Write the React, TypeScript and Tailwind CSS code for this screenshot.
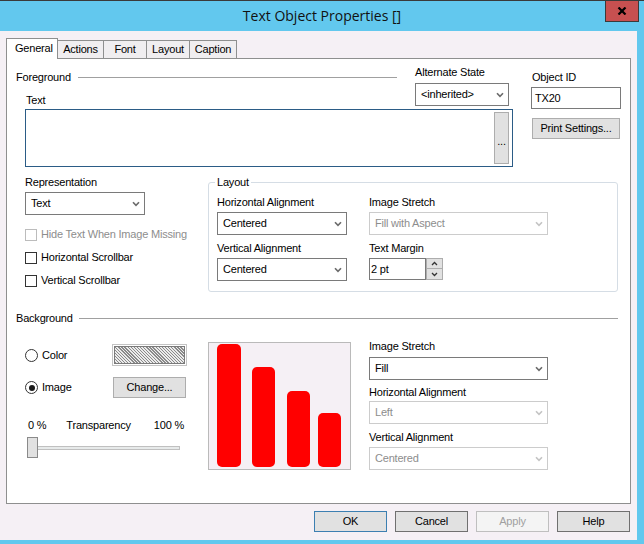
import React from "react";

const Chevron = ({ disabled }: { disabled?: boolean }) => (
  <svg width="8" height="6" viewBox="0 0 8 6" className="shrink-0">
    <path
      d="M1 1.2 L4 4.4 L7 1.2"
      fill="none"
      stroke={disabled ? "#c4c4c4" : "#6b6b6b"}
      strokeWidth="1.6"
    />
  </svg>
);

const Dropdown = ({
  value,
  width,
  disabled,
}: {
  value: string;
  width: string;
  disabled?: boolean;
}) => (
  <div
    className={`${width} h-[23px] flex items-center justify-between pl-[5px] pr-[4px] bg-white border ${
      disabled ? "border-[#cccccc] text-[#8d8d8d]" : "border-[#7a7a7a] text-black"
    }`}
  >
    <span>{value}</span>
    <Chevron disabled={disabled} />
  </div>
);

const Button = ({ label, width, extra }: { label: string; width: string; extra?: string }) => (
  <div
    className={`${width} h-[21px] flex items-center justify-center bg-[#e1e1e1] border ${
      extra ?? "border-[#adadad]"
    }`}
  >
    {label}
  </div>
);

const Checkbox = ({ label, disabled }: { label: string; disabled?: boolean }) => (
  <div className="h-[23px] flex items-center">
    <div
      className={`w-[12px] h-[12px] bg-white border ${
        disabled ? "border-[#bcbcbc]" : "border-[#333333]"
      }`}
    />
    <span className={`ml-[4px] ${disabled ? "text-[#8d8d8d]" : ""}`}>{label}</span>
  </div>
);

const Radio = ({ label, checked }: { label: string; checked?: boolean }) => (
  <div className="flex items-center">
    <div className="w-[13px] h-[13px] rounded-full bg-white border border-[#333333] flex items-center justify-center">
      {checked && <div className="w-[6px] h-[6px] rounded-full bg-[#1a1a1a]" />}
    </div>
    <span className="ml-[4px]">{label}</span>
  </div>
);

const tabs = [
  { name: "Actions", w: "w-[46px]" },
  { name: "Font", w: "w-[43px]" },
  { name: "Layout", w: "w-[43px]" },
  { name: "Caption", w: "w-[47px]" },
];

export default function App() {
  return (
    <div className="w-[644px] h-[544px] overflow-hidden bg-[#62c8ee] border-t border-[#3a3a3a] font-['Liberation_Sans',Arial,sans-serif] text-[11px] leading-[13px] tracking-[-0.2px] text-black">
      {/* title bar */}
      <div className="relative h-[30px] flex items-center justify-center">
        <span className="font-['Open_Sans',sans-serif] text-[14px] leading-[18px] tracking-normal text-[#111]">
          Text Object Properties []
        </span>
        <div className="absolute right-[5px] top-0 w-[34px] h-[21px] bg-[#c75050] border-x border-b border-[#3a3a3a] flex items-center justify-center">
          <svg width="10" height="8" viewBox="0 0 10 8">
            <path d="M1.5 0.5 L8.5 7.5 M8.5 0.5 L1.5 7.5" stroke="#000" strokeWidth="2.2" />
          </svg>
        </div>
      </div>

      {/* client area */}
      <div className="w-[637px] h-[509px] bg-[#f5f0f5] flex flex-col">
        {/* tabs */}
        <div className="h-[27px] pt-[7px] pl-[6px] flex items-end">
          <div className="relative z-10 w-[52px] h-[21px] -mb-px bg-white border-x border-t border-[#8e8f8f] pl-[8px] pt-[3px]">
            General
          </div>
          {tabs.map((t) => (
            <div
              key={t.name}
              className={`${t.w} h-[18px] bg-[#f0eef0] border-t border-r border-[#8e8f8f] flex items-center justify-center`}
            >
              {t.name}
            </div>
          ))}
        </div>

        {/* panel */}
        <div className="ml-[6px] w-[625px] h-[446px] border border-[#8e8f8f] bg-white flex flex-col">
          {/* foreground section */}
          <div className="flex pt-[7px] pl-[9px]">
            <div className="w-[497px] flex flex-col">
              <div className="flex h-[43px]">
                <div className="w-[381px] flex flex-col">
                  <div className="mt-[5px] h-[13px] flex items-center">
                    <span>Foreground</span>
                    <div className="flex-1 ml-[7px] h-px bg-[#a0a0a0]" />
                  </div>
                  <div className="mt-[10px] pl-[10px]">Text</div>
                </div>
                <div className="ml-[18px] w-[94px] flex flex-col">
                  <div>Alternate State</div>
                  <div className="mt-[4px]">
                    <Dropdown value="<inherited>" width="w-[94px]" />
                  </div>
                </div>
              </div>
              <div className="ml-[9px] w-[488px] h-[58px] border border-[#2b5c86] bg-white flex justify-end p-[2px] pr-[3px]">
                <div className="w-[15px] bg-[#e1e1e1] border border-[#adadad] flex items-center justify-center pt-[6px]">
                  ...
                </div>
              </div>
            </div>
            <div className="ml-[18px] w-[90px] flex flex-col">
              <div className="mt-[5px] pl-[1px]">Object ID</div>
              <div className="mt-[3px] h-[22px] border border-[#7a7a7a] bg-white flex items-center pl-[3px]">
                TX20
              </div>
              <div className="mt-[9px] ml-[1px]">
                <Button label="Print Settings..." width="w-[88px]" />
              </div>
            </div>
          </div>

          {/* representation + layout */}
          <div className="flex pl-[18px]">
            <div className="w-[183px] flex flex-col">
              <div className="mt-[9px]">Representation</div>
              <div className="mt-[3px]">
                <Dropdown value="Text" width="w-[120px]" />
              </div>
              <div className="mt-[8px] flex flex-col">
                <Checkbox label="Hide Text When Image Missing" disabled />
                <Checkbox label="Horizontal Scrollbar" />
                <Checkbox label="Vertical Scrollbar" />
              </div>
            </div>
            <div className="relative mt-[15px] w-[410px] h-[110px] border border-[#d5dde5] rounded-[3px]">
              <span className="absolute -top-[7px] left-[6px] px-[2px] bg-white">Layout</span>
              <div className="flex pl-[8px] pt-[13px]">
                <div className="w-[130px] flex flex-col">
                  <div>Horizontal Alignment</div>
                  <div className="mt-[3px]">
                    <Dropdown value="Centered" width="w-[130px]" />
                  </div>
                  <div className="mt-[7px]">Vertical Alignment</div>
                  <div className="mt-[3px]">
                    <Dropdown value="Centered" width="w-[130px]" />
                  </div>
                </div>
                <div className="ml-[22px] w-[179px] flex flex-col">
                  <div>Image Stretch</div>
                  <div className="mt-[3px]">
                    <Dropdown value="Fill with Aspect" width="w-[179px]" disabled />
                  </div>
                  <div className="mt-[7px]">Text Margin</div>
                  <div className="mt-[3px] flex">
                    <div className="w-[57px] h-[22px] border border-[#7a7a7a] bg-white flex items-center pl-[1px]">
                      2 pt
                    </div>
                    <div className="w-[17px] h-[22px] flex flex-col">
                      <div className="h-[11px] bg-[#e1e1e1] border border-[#adadad] flex items-center justify-center">
                        <svg width="7" height="5" viewBox="0 0 7 5">
                          <path d="M1 4 L3.5 1.5 L6 4" fill="none" stroke="#333" strokeWidth="1.3" />
                        </svg>
                      </div>
                      <div className="h-[11px] bg-[#e1e1e1] border border-t-0 border-[#adadad] flex items-center justify-center">
                        <svg width="7" height="5" viewBox="0 0 7 5">
                          <path d="M1 1 L3.5 3.5 L6 1" fill="none" stroke="#333" strokeWidth="1.3" />
                        </svg>
                      </div>
                    </div>
                  </div>
                </div>
              </div>
            </div>
          </div>

          {/* background */}
          <div className="mt-[20px] ml-[9px] w-[602px] h-[13px] flex items-center">
            <span>Background</span>
            <div className="flex-1 ml-[6px] h-px bg-[#a0a0a0]" />
          </div>
          <div className="flex pl-[18px]">
            <div className="w-[183px] flex flex-col">
              <div className="mt-[19px] h-[22px] flex items-center">
                <div className="w-[87px]">
                  <Radio label="Color" />
                </div>
                <div className="w-[75px] h-[22px] border border-[#c4c4c4] p-[1px]">
                  <div className="w-full h-full border border-[#7a7a7a] bg-[image:repeating-linear-gradient(45deg,#8a8a8a_0px,#8a8a8a_1px,#ebebeb_1px,#ebebeb_2.2px)]" />
                </div>
              </div>
              <div className="mt-[11px] h-[21px] flex items-center">
                <div className="w-[88px]">
                  <Radio label="Image" checked />
                </div>
                <Button label="Change..." width="w-[73px]" />
              </div>
              <div className="mt-[21px] w-[159px] flex pl-[3px]">
                <span>0 %</span>
                <span className="ml-[20px]">Transparency</span>
                <span className="ml-auto">100 %</span>
              </div>
              <div className="mt-[5px] h-[21px] flex items-center pl-[2px]">
                <div className="w-[11px] h-[21px] bg-[#e1e1e1] border border-[#8a8a8a]" />
                <div className="w-[142px] h-[4px] bg-[#e7eaea] border border-[#c0c0c0] border-l-0" />
              </div>
            </div>
            <div className="mt-[17px] w-[143px] h-[128px] border border-[#bababa] bg-[#f5f0f5]">
              <svg width="141" height="126" viewBox="0 0 141 126">
                <rect x="8" y="1" width="24" height="123" rx="5" fill="#ff0000" />
                <rect x="43" y="24" width="23" height="100" rx="5" fill="#ff0000" />
                <rect x="78" y="48" width="23" height="76" rx="5" fill="#ff0000" />
                <rect x="109" y="70" width="23" height="54" rx="5" fill="#ff0000" />
              </svg>
            </div>
            <div className="ml-[18px] w-[179px] flex flex-col">
              <div className="mt-[15px]">Image Stretch</div>
              <div className="mt-[4px]">
                <Dropdown value="Fill" width="w-[179px]" />
              </div>
              <div className="mt-[6px]">Horizontal Alignment</div>
              <div className="mt-[2px]">
                <Dropdown value="Left" width="w-[179px]" disabled />
              </div>
              <div className="mt-[7px]">Vertical Alignment</div>
              <div className="mt-[3px]">
                <Dropdown value="Centered" width="w-[179px]" disabled />
              </div>
            </div>
          </div>
        </div>

        {/* dialog buttons */}
        <div className="mt-[7px] flex justify-end gap-[8px] pr-[7px]">
          <Button label="OK" width="w-[73px]" extra="border-[#3c7fb1]" />
          <Button label="Cancel" width="w-[73px]" extra="border-[#707070]" />
          <div className="w-[73px] h-[21px] flex items-center justify-center bg-[#f4f4f4] border border-[#bfbfbf] text-[#a0a0a0]">
            Apply
          </div>
          <Button label="Help" width="w-[73px]" extra="border-[#707070]" />
        </div>
      </div>
    </div>
  );
}
